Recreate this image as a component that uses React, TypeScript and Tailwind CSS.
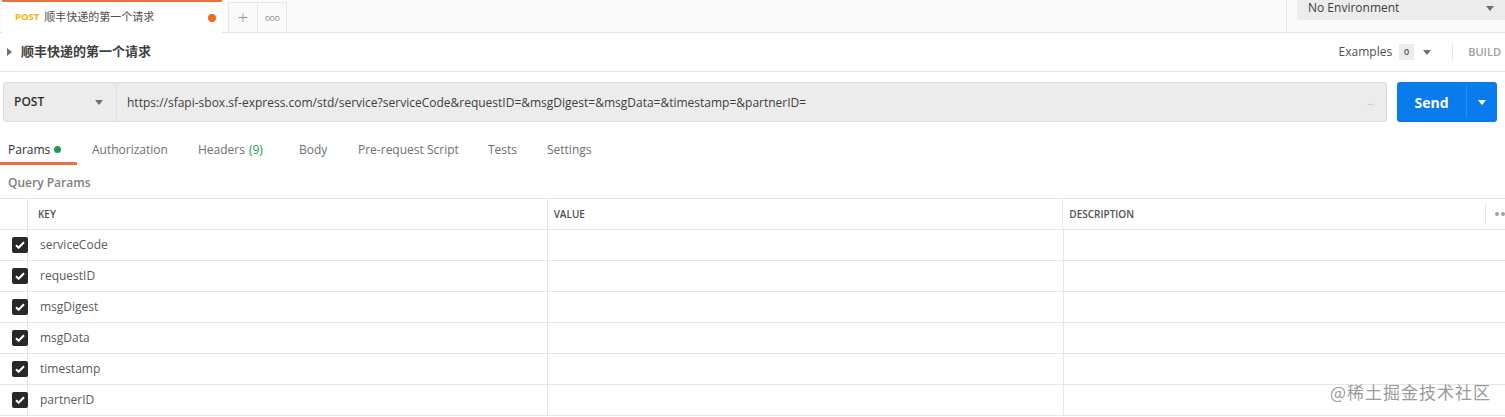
import React from "react";

const font = { fontFamily: '"Open Sans", "Noto Sans CJK SC", sans-serif' };

const params = ["serviceCode", "requestID", "msgDigest", "msgData", "timestamp", "partnerID"];

const tabs = [
  { label: "Authorization", w: "w-[106px]" },
  { label: "Headers", extra: "(9)", w: "w-[101px]" },
  { label: "Body", w: "w-[59px]" },
  { label: "Pre-request Script", w: "w-[130px]" },
  { label: "Tests", w: "w-[59px]" },
  { label: "Settings", w: "w-[70px]" },
];

function Caret({ className = "" }: { className?: string }) {
  return (
    <svg width="8" height="5" viewBox="0 0 8 5" className={className}>
      <path d="M0 0h8L4 5z" fill="currentColor" />
    </svg>
  );
}

function Check() {
  return (
    <div className="flex h-4 w-4 items-center justify-center rounded-[2px] bg-[#282828]">
      <svg width="10" height="8" viewBox="0 0 10 8">
        <path d="M1 4.2l2.6 2.6L9 1.2" stroke="white" strokeWidth="2" fill="none" />
      </svg>
    </div>
  );
}

export default function App() {
  return (
    <div className="relative h-[417px] w-[1505px] overflow-hidden bg-white text-[#505050]" style={font}>
      {/* tab bar */}
      <div className="flex h-[33px] border-b border-[#e6e6e6] bg-[#fafafa]">
        <div className="ml-[2px] -mb-px flex h-[33px] w-[220px] items-center border-t-2 border-[#e9703f] bg-white pl-[13px] pr-[6px]">
          <span className="text-[9.5px] font-bold text-[#f4b400]">POST</span>
          <span className="ml-[5px] text-[11px] text-[#505050]">顺丰快递的第一个请求</span>
          <span className="ml-auto h-2 w-2 rounded-full bg-[#f26b1d]" />
        </div>
        <div className="ml-[6px] mt-[2px] flex h-[30px] border border-b-0 border-[#e6e6e6] bg-[#fafafa]">
          <div className="flex w-[29px] items-center justify-center border-r border-[#e6e6e6] text-[18px] font-light text-[#909090]">+</div>
          <div className="flex w-[28px] items-center justify-center text-[9px] tracking-[-0.5px] text-[#909090]">ooo</div>
        </div>
        <div className="ml-auto h-full w-px bg-[#e6e6e6]" />
        <div className="ml-[10px] flex h-[20px] w-[208px] items-end rounded-bl-[2px] bg-[#ececec] pb-[5px] pl-[11px] pr-[11px]">
          <span className="text-[12px] leading-[14px] text-[#404040]">No Environment</span>
          <Caret className="mb-[4px] ml-auto text-[#707070]" />
        </div>
      </div>

      {/* title row */}
      <div className="flex h-[39px] items-center border-b border-[#e6e6e6] pl-[7px] pr-[4px]">
        <svg width="5" height="8" viewBox="0 0 5 8" className="text-[#707070]">
          <path d="M0 0l5 4-5 4z" fill="currentColor" />
        </svg>
        <span className="ml-[9px] text-[13px] font-bold text-[#404040]">顺丰快递的第一个请求</span>
        <div className="ml-auto flex items-center">
          <span className="text-[12px] text-[#505050]">Examples</span>
          <span className="ml-[7px] flex h-[16px] w-[15px] items-center justify-center bg-[#ececec] text-[9px] font-semibold text-[#505050]">0</span>
          <Caret className="ml-[9px] text-[#707070]" />
          <span className="ml-[21px] h-[18px] w-px bg-[#e6e6e6]" />
          <span className="ml-[15px] text-[11px] font-semibold text-[#a0a0a0]">BUILD</span>
        </div>
      </div>

      {/* url row */}
      <div className="mt-[10px] flex h-[40px] pl-[3px] pr-[8px]">
        <div className="flex w-[114px] items-center rounded-l-[3px] border border-[#dcdcdc] bg-[#ececec] pl-[10px] pr-[13px]">
          <span className="text-[12px] font-semibold text-[#303030]">POST</span>
          <Caret className="ml-auto text-[#707070]" />
        </div>
        <div className="flex flex-1 items-center rounded-r-[3px] border border-l-0 border-[#dcdcdc] bg-[#ececec] pl-[10px] pr-[12px]">
          <span className="pt-px text-[12px] text-[#404040]">
            https://sfapi-sbox.sf-express.com/std/service?serviceCode&amp;requestID=&amp;msgDigest=&amp;msgData=&amp;timestamp=&amp;partnerID=
          </span>
          <span className="ml-auto text-[9px] text-[#a0a0a0]">...</span>
        </div>
        <div className="ml-[10px] flex w-[100px] rounded-[3px] bg-[#097bed] text-white">
          <div className="flex w-[69px] items-center justify-center text-[14px] font-bold">Send</div>
          <div className="my-[4px] w-px bg-[#2b8ff2]" />
          <div className="flex flex-1 items-center justify-center">
            <Caret />
          </div>
        </div>
      </div>

      {/* request tabs */}
      <div className="mt-[15px] flex h-[28px] items-stretch">
        <div className="flex w-[77px] items-center border-b-[3px] border-[#e9703f] pl-[8px]">
          <span className="text-[12px] text-[#303030]">Params</span>
          <span className="ml-[4px] h-[7px] w-[7px] rounded-full bg-[#1e9c4b]" />
        </div>
        <div className="ml-[15px] flex">
          {tabs.map((t) => (
            <div key={t.label} className={`flex items-center pb-[3px] text-[12px] text-[#707070] ${t.w}`}>
              {t.label}
              {t.extra && <span className="ml-[4px] text-[#1e9c4b]">{t.extra}</span>}
            </div>
          ))}
        </div>
      </div>

      <div className="mt-[9px] pl-[8px] text-[12px] font-semibold text-[#808080]">Query Params</div>

      {/* table */}
      <div className="mt-[6px] border-t border-[#e6e6e6]">
        <div className="flex h-[31px] border-b border-[#e6e6e6] text-[10px] font-semibold text-[#505050]">
          <div className="w-[28px] border-r border-[#e6e6e6]" />
          <div className="flex w-[520px] items-center border-r border-[#e6e6e6] pl-[10px]">KEY</div>
          <div className="flex w-[516px] items-center border-r border-[#e6e6e6] pl-[6px]">VALUE</div>
          <div className="flex w-[422px] items-center pl-[6px]">DESCRIPTION</div>
          <div className="my-[5px] flex flex-1 items-center gap-[2px] border-l border-[#e6e6e6] pl-[9px]">
            <span className="h-[4px] w-[4px] rounded-full bg-[#a0a0a0]" />
            <span className="h-[4px] w-[4px] rounded-full bg-[#a0a0a0]" />
          </div>
        </div>
        {params.map((p) => (
          <div key={p} className="flex h-[31px] border-b border-[#e6e6e6]">
            <div className="flex w-[28px] items-center justify-end border-r border-[#e6e6e6]">
              <div className="-mr-[1px]">
                <Check />
              </div>
            </div>
            <div className="flex w-[520px] items-center border-r border-[#e6e6e6] pl-[12px] text-[12px] text-[#5a5a5a]">{p}</div>
            <div className="w-[516px] border-r border-[#e6e6e6]" />
            <div className="flex-1" />
          </div>
        ))}
      </div>

      <div
        className="pointer-events-none absolute left-[1330px] top-[379px] text-[17px] tracking-[1px] text-[#9a9a9a]"
        style={{ fontFamily: '"Noto Sans CJK SC", sans-serif' }}
      >
        @稀土掘金技术社区
      </div>
    </div>
  );
}
